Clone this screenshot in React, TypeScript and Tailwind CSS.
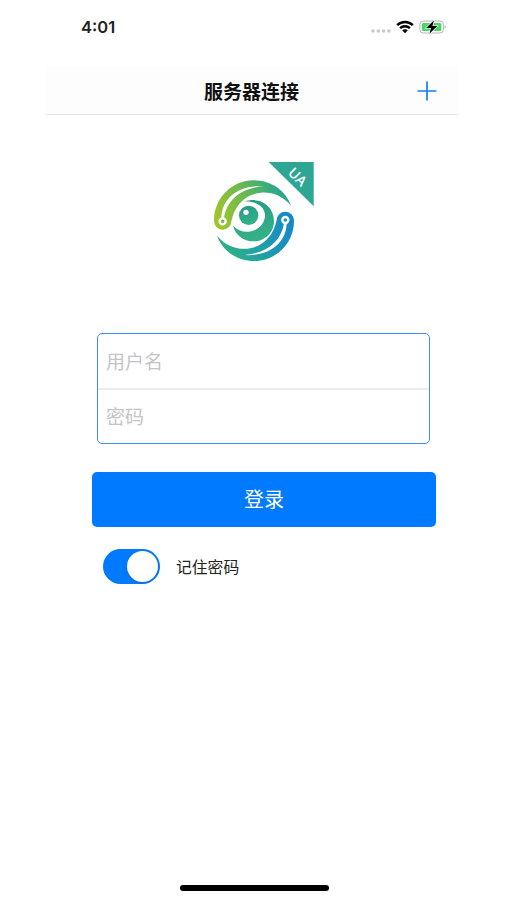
import React, { useState } from 'react';

const Logo: React.FC = () => (
    <svg viewBox="39 33 303 306" className="h-[102px] w-[101px]" aria-hidden="true">
        <defs>
            <linearGradient id="upper" gradientUnits="userSpaceOnUse" x1="50" y1="200" x2="235" y2="120">
                <stop offset="0" stopColor="#9fc52b" />
                <stop offset="0.5" stopColor="#6bb94f" />
                <stop offset="1" stopColor="#2ba88b" />
            </linearGradient>
            <linearGradient id="lower" gradientUnits="userSpaceOnUse" x1="90" y1="290" x2="275" y2="230">
                <stop offset="0" stopColor="#2cae8c" />
                <stop offset="0.45" stopColor="#20a0a5" />
                <stop offset="1" stopColor="#1688ca" />
            </linearGradient>
            <linearGradient id="eye" x1="0" y1="0" x2="0.3" y2="1">
                <stop offset="0" stopColor="#22998a" />
                <stop offset="1" stopColor="#35b187" />
            </linearGradient>
        </defs>
        <path
            d="M42 212C42 144 96 91 161 91C214 91 257 122 273 167C249 138 216 125 182 128C138 132 104 164 94 214A26 26 0 0 1 42 212Z"
            fill="url(#upper)"
        />
        <path d="M64 204C65 148 112 104 192 109C124 113 80 150 72 204Z" fill="#fff" />
        <circle cx="68" cy="214" r="9" fill="#79bb45" stroke="#fff" strokeWidth="7" />
        <path
            d="M282 212C282 280 228 333 163 333C110 333 67 302 51 257C75 286 108 299 142 296C186 292 220 260 230 210A26 26 0 0 1 282 212Z"
            fill="url(#lower)"
        />
        <path d="M260 220C259 276 212 320 132 315C200 311 244 274 252 220Z" fill="#fff" />
        <circle cx="256" cy="210" r="9" fill="#1d97b5" stroke="#fff" strokeWidth="7" />
        <path
            d="M134 155C181 138 222 170 222 213C222 248 195 274 161 274C130 274 106 255 99 227C112 240 127 246 144 245C174 243 195 222 195 196C195 170 169 153 134 155Z"
            fill="url(#eye)"
        />
        <circle cx="146" cy="196" r="29" fill="url(#eye)" />
        <circle cx="138" cy="187" r="8" fill="#fff" />
        <path d="M206 36H341V169Z" fill="#2da793" />
        <text
            x="292"
            y="95"
            textAnchor="middle"
            transform="rotate(45 292 81)"
            fill="#fff"
            className="font-['Noto_Sans',sans-serif] text-[42px] font-medium"
        >
            UA
        </text>
    </svg>
);

const StatusBar: React.FC = () => (
    <div className="flex h-[54px] items-center justify-between pr-[11px] pl-[35px]">
        <span className="pt-px font-['Inter',sans-serif] text-[16.5px] font-semibold text-[#222]">4:01</span>
        <div className="flex items-center gap-[5px]">
            <svg viewBox="0 0 20 4" className="mt-[7px] h-1 w-5" fill="#c8c8c8" aria-hidden="true">
                {[2, 7.3, 12.6, 17.9].map((cx) => (
                    <circle key={cx} cx={cx} cy="2" r="1.8" />
                ))}
            </svg>
            <svg viewBox="0 0 18 14" className="h-[14px] w-[18px]" aria-hidden="true">
                <g fill="none" stroke="#000" strokeWidth="2.4">
                    <path d="M1.2 5.2C5.4 .9 12.6 .9 16.8 5.2" />
                    <path d="M4.1 8.2C6.8 5.6 11.2 5.6 13.9 8.2" />
                </g>
                <path d="M6.2 10.3C7.8 8.9 10.2 8.9 11.8 10.3L9 13.2Z" />
            </svg>
            <svg viewBox="0 0 28 16" className="h-4 w-7" aria-hidden="true">
                <rect x=".8" y="2" width="23.6" height="12" rx="3.5" fill="#fff" stroke="#b5b5b5" />
                <rect x="2.8" y="4" width="19.6" height="8" rx="1.5" fill="#4cd566" />
                <path d="M25.6 6Q28 8 25.6 10Z" fill="#aaa" />
                <path
                    d="M15 1.3L7 9H12L10.4 14.7L18.4 7H13.4Z"
                    fill="#000"
                    stroke="#fff"
                    strokeWidth="1.2"
                    className="[paint-order:stroke]"
                />
            </svg>
        </div>
    </div>
);

const App: React.FC = () => {
    const [remember, setRemember] = useState(true);

    return (
        <div className="flex h-[900px] w-[507px] flex-col bg-white pr-[49px] pl-[46px] font-['Noto_Sans_CJK_SC',sans-serif]">
            <StatusBar />
            <header className="mt-3 grid h-[49px] grid-cols-[1fr_auto_1fr] items-center border-b border-[#e5e5e5] bg-[#fdfdfd] pr-[21px] pl-5">
                <h1 className="col-start-2 pt-px text-[19px] leading-6 font-bold text-[#111]">服务器连接</h1>
                <button aria-label="添加" className="justify-self-end pt-px">
                    <svg viewBox="0 0 20 20" className="h-5 w-5" fill="none" stroke="#147efb" strokeWidth="1.7">
                        <path d="M10 .5V19.5M.5 10H19.5" />
                    </svg>
                </button>
            </header>

            <div className="mt-[46px] pl-[167px]">
                <Logo />
            </div>

            <form className="mt-[70px] flex w-[390px] flex-col pl-[46px]" onSubmit={(e) => e.preventDefault()}>
                <div className="mr-[6px] ml-[5px] flex h-[111px] flex-col rounded-[5px] border border-[#3f8ff0]">
                    <input
                        type="text"
                        placeholder="用户名"
                        className="h-[56px] border-b-2 border-[#ececec] px-2 pb-0.5 text-[19px] font-normal outline-none placeholder:text-[#c4c4c6]"
                    />
                    <input
                        type="password"
                        placeholder="密码"
                        className="h-[53px] px-2 pb-0.5 text-[19px] font-normal outline-none placeholder:text-[#c4c4c6]"
                    />
                </div>
                <button className="mt-7 h-[55px] rounded-[5px] bg-[#007aff] pb-0.5 text-[20px] text-white">登录</button>
                <div className="mt-[22px] flex items-center gap-4 pl-[11px]">
                    <button
                        type="button"
                        role="switch"
                        aria-checked={remember}
                        aria-label="记住密码"
                        onClick={() => setRemember(!remember)}
                        className={`flex h-[35px] w-[57px] items-center rounded-full px-[2px] ${remember ? 'justify-end bg-[#007aff]' : 'bg-[#e5e5ea]'}`}
                    >
                        <span className="h-[31px] w-[31px] rounded-full bg-white shadow-sm" />
                    </button>
                    <span className="pt-px text-[15.8px] text-[#222]">记住密码</span>
                </div>
            </form>

            <div className="mt-auto mb-[9px] ml-[134px] h-[6px] w-[149px] rounded-full bg-black" />
        </div>
    );
};

export default App;
